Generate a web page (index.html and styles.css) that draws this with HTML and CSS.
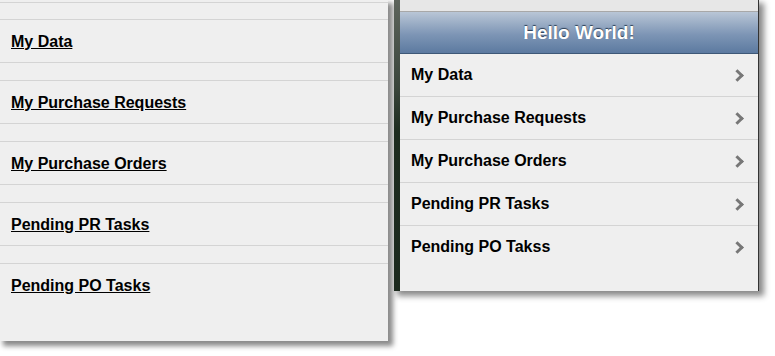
FILE: index.html
```html
<!DOCTYPE html>
<html lang="en">
<head>
    <meta charset="UTF-8">
    <title>Menu</title>
    <link rel="stylesheet" href="styles.css">
</head>
<body>
<div class="main">
    <div class="plain">
        <ul class="plain_list">
            <li class="gap"></li>
            <li class="item"><a href="#">My Data</a></li>
            <li class="gap"></li>
            <li class="item"><a href="#">My Purchase Requests</a></li>
            <li class="gap"></li>
            <li class="item"><a href="#">My Purchase Orders</a></li>
            <li class="gap"></li>
            <li class="item"><a href="#">Pending PR Tasks</a></li>
            <li class="gap"></li>
            <li class="item"><a href="#">Pending PO Tasks</a></li>
        </ul>
    </div>
    <div class="phone_wrap">
        <div class="edge"></div>
        <div class="phone">
            <div class="phone_top"></div>
            <div class="header">Hello World!</div>
            <ul class="menu">
                <li><a href="#">My Data<span class="arrow"></span></a></li>
                <li><a href="#">My Purchase Requests<span class="arrow"></span></a></li>
                <li><a href="#">My Purchase Orders<span class="arrow"></span></a></li>
                <li><a href="#">Pending PR Tasks<span class="arrow"></span></a></li>
                <li><a href="#">Pending PO Takss<span class="arrow"></span></a></li>
            </ul>
        </div>
    </div>
</div>
</body>
</html>
```

FILE: styles.css
```css
* {
    margin: 0;
    padding: 0;
}

body {
    background-color: #fff;
    font-family: "Liberation Sans", Arial, sans-serif;
    font-weight: bold;
}

.main {
    display: flex;
    align-items: flex-start;
    width: 775px;
    height: 356px;
}

/* left screenshot: unstyled list */
.plain {
    width: 388px;
    height: 341px;
    padding-top: 2px;
    box-sizing: border-box;
    background-color: #efefef;
    box-shadow: 4px 4px 5px 1px #8a8a8a;
}

.plain_list {
    list-style: none;
}

.plain_list .gap {
    height: 17px;
    border-top: 1px solid #d4d4d4;
    border-bottom: 1px solid #d4d4d4;
}

.plain_list .gap:first-child {
    height: 16px;
}

.plain_list .item {
    height: 42px;
    line-height: 43px;
    padding-left: 11px;
    font-size: 16px;
}

.plain_list a {
    color: #000;
    text-decoration: underline;
}

/* right screenshot: styled list */
.phone_wrap {
    display: flex;
    height: 291px;
    margin-left: 6px;
    box-shadow: 4px 4px 6px 1px #8a8a8a;
}

.edge {
    width: 6px;
    background: linear-gradient(#5d645c, #3a453b 30%, #1d2c1f 45%, #1c2a1e);
}

.phone {
    width: 358px;
    border-right: 1px solid #333;
    background-color: #efefef;
}

.phone_top {
    height: 11px;
    background-color: #e7e7e7;
    border-bottom: 1px solid #a8a8a8;
}

.header {
    height: 41px;
    line-height: 41px;
    text-align: center;
    color: #fff;
    font-size: 19px;
    text-shadow: 0 -1px 1px #2a3d55;
    background: linear-gradient(#b9c6d6, #7d95b5 55%, #5c7aa0);
    border-bottom: 1px solid #3e5877;
}

.menu {
    list-style: none;
}

.menu li {
    border-bottom: 1px solid #d4d4d4;
}

.menu li:last-child {
    border-bottom: 0;
}

.menu a {
    display: flex;
    justify-content: space-between;
    align-items: center;
    height: 42px;
    padding: 0 14px 0 11px;
    color: #000;
    font-size: 16px;
    text-decoration: none;
}

.arrow {
    width: 6px;
    height: 6px;
    margin-right: 2px;
    border-top: 3px solid #777;
    border-right: 3px solid #777;
    transform: rotate(45deg);
}
```
